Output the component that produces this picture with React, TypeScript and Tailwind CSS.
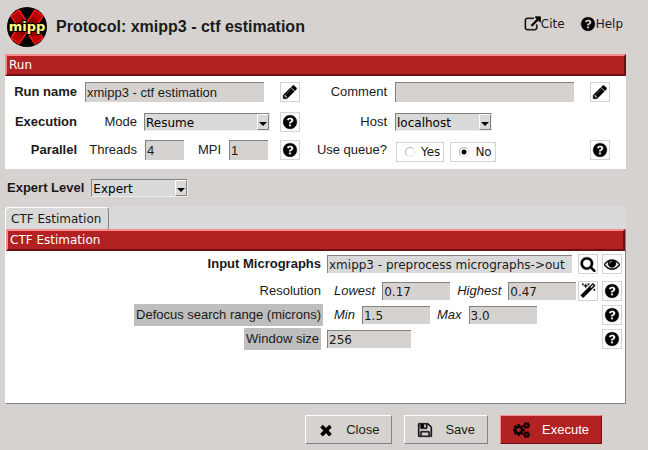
import type { ReactNode } from "react";

const ICONS = {
  pencil:
    "M491 1536l91-91-235-235-91 91v107h128v128h107zm523-928q0-22-22-22-10 0-17 7l-542 542q-7 7-7 17 0 22 22 22 10 0 17-7l542-542q7-7 7-17zm-54-192l416 416-832 832h-416v-416zm683 96q0 53-37 90l-166 166-416-416 166-165q36-38 90-38 53 0 91 38l235 234q37 39 37 91z",
  help:
    "M1024 1376v-192q0-14-9-23t-23-9h-192q-14 0-23 9t-9 23v192q0 14 9 23t23 9h192q14 0 23-9t9-23zm256-672q0-88-55.5-163t-138.5-116-170-41q-243 0-371 213-15 24 8 42l132 100q7 6 19 6 16 0 25-12 53-68 86-92 34-24 86-24 48 0 85.5 26t37.5 59q0 38-20 61t-68 45q-63 28-115.5 86.5t-52.5 125.5v36q0 14 9 23t23 9h192q14 0 23-9t9-23q0-19 21.5-49.5t54.5-49.5q32-18 49-28.5t46-35 44.5-48 28-60.5 12.5-81zm384 192q0 209-103 385.5t-279.5 279.5-385.5 103-385.5-103-279.5-279.5-103-385.5 103-385.5 279.5-279.5 385.5-103 385.5 103 279.5 279.5 103 385.5z",
  search:
    "M1216 832q0-185-131.5-316.5t-316.5-131.5-316.5 131.5-131.5 316.5 131.5 316.5 316.5 131.5 316.5-131.5 131.5-316.5zm512 832q0 52-38 90t-90 38q-54 0-90-38l-343-342q-179 124-399 124-143 0-273.5-55.5t-225-150-150-225-55.5-273.5 55.5-273.5 150-225 225-150 273.5-55.5 273.5 55.5 225 150 150 225 55.5 273.5q0 220-124 399l343 343q37 37 37 90z",
  eye:
    "M1664 960q-152-236-381-353 61 104 61 225 0 185-131.5 316.5t-316.5 131.5-316.5-131.5-131.5-316.5q0-121 61-225-229 117-381 353 133 205 333.5 326.5t434.5 121.5 434.5-121.5 333.5-326.5zm-720-384q0-20-14-34t-34-14q-125 0-214.5 89.5t-89.5 214.5q0 20 14 34t34 14 34-14 14-34q0-86 61-147t147-61q20 0 34-14t14-34zm848 384q0 34-20 69-140 230-376.5 368.5t-499.5 138.5-499.5-139-376.5-368q-20-35-20-69t20-69q140-229 376.5-368t499.5-139 499.5 139 376.5 368q20 35 20 69z",
  external:
    "M1472 992v320q0 119-84.5 203.5t-203.5 84.5h-832q-119 0-203.5-84.5t-84.5-203.5v-832q0-119 84.5-203.5t203.5-84.5h704q14 0 23 9t9 23v64q0 14-9 23t-23 9h-704q-66 0-113 47t-47 113v832q0 66 47 113t113 47h832q66 0 113-47t47-113v-320q0-14 9-23t23-9h64q14 0 23 9t9 23zm384-864v512q0 26-19 45t-45 19-45-19l-176-176-652 652q-10 10-23 10t-23-10l-114-114q-10-10-10-23t10-23l652-652-176-176q-19-19-19-45t19-45 45-19h512q26 0 45 19t19 45z",
  magic:
    "M1254 581l293-293-107-107-293 293zm447-293q0 27-18 45l-1286 1286q-18 18-45 18t-45-18l-198-198q-18-18-18-45t18-45l1286-1286q18-18 45-18t45 18l198 198q18 18 18 45zm-1351-190l98 30-98 30-30 98-30-98-98-30 98-30 30-98zm350 162l196 60-196 60-60 196-60-196-196-60 196-60 60-196zm930 478l98 30-98 30-30 98-30-98-98-30 98-30 30-98zm-640-640l98 30-98 30-30 98-30-98-98-30 98-30 30-98z",
  save:
    "M512 1536h768v-384h-768v384zm896 0h128v-896q0-14-10-38.5t-20-34.5l-281-281q-10-10-34-20t-39-10v416q0 40-28 68t-68 28h-576q-40 0-68-28t-28-68v-416h-128v1280h128v-416q0-40 28-68t68-28h832q40 0 68 28t28 68v416zm-384-928v-320q0-13-9.5-22.5t-22.5-9.5h-192q-13 0-22.5 9.5t-9.5 22.5v320q0 13 9.5 22.5t22.5 9.5h192q13 0 22.5-9.5t9.5-22.5zm640 32v928q0 40-28 68t-68 28h-1344q-40 0-68-28t-28-68v-1344q0-40 28-68t68-28h928q40 0 88 20t76 48l280 280q28 28 48 76t20 88z",
  times:
    "M1490 1322q0 40-28 68l-136 136q-28 28-68 28t-68-28l-294-294-294 294q-28 28-68 28t-68-28l-136-136q-28-28-28-68t28-68l294-294-294-294q-28-28-28-68t28-68l136-136q28-28 68-28t68 28l294 294 294-294q28-28 68-28t68 28l136 136q28 28 28 68t-28 68l-294 294 294 294q28 28 28 68z",
  cogs:
    "M896 896q0-106-75-181t-181-75-181 75-75 181 75 181 181 75 181-75 75-181zm768 512q0-52-38-90t-90-38-90 38-38 90q0 53 37.5 90.5t90.5 37.5 90.5-37.5 37.5-90.5zm0-1024q0-52-38-90t-90-38-90 38-38 90q0 53 37.5 90.5t90.5 37.5 90.5-37.5 37.5-90.5zm-384 421v185q0 10-7 19.5t-16 10.5l-155 24q-11 35-32 76 34 48 90 115 7 11 7 20 0 12-7 19-23 30-82.5 89.5t-78.5 59.5q-11 0-21-7l-115-90q-37 19-77 31-11 108-23 155-7 24-30 24h-186q-11 0-20-7.5t-10-17.5l-23-153q-34-10-75-31l-118 89q-7 7-20 7-11 0-21-8-144-133-144-160 0-9 7-19 10-14 41-53t47-61q-23-44-35-82l-152-24q-10-1-17-9.5t-7-19.5v-185q0-10 7-19.5t16-10.5l155-24q11-35 32-76-34-48-90-115-7-11-7-20 0-12 7-20 22-30 82-89t79-59q11 0 21 7l115 90q34-18 77-32 11-108 23-154 7-24 30-24h186q11 0 20 7.5t10 17.5l23 153q34 10 75 31l118-89q8-7 20-7 11 0 21 8 144 133 144 160 0 8-7 19-12 16-42 54t-45 60q23 48 34 82l152 23q10 2 17 10.5t7 19.5zm640 533v140q0 16-149 31-12 27-30 52 51 113 51 138 0 4-4 7-122 71-124 71-8 0-46-47t-52-68q-20 2-30 2t-30-2q-14 21-52 68t-46 47q-2 0-124-71-4-3-4-7 0-25 51-138-18-25-30-52-149-15-149-31v-140q0-16 149-31 13-29 30-52-51-113-51-138 0-4 4-7 4-2 35-20t59-34 30-16q8 0 46 46.5t52 67.5q20-2 30-2t30 2q51-71 92-112l6-2q4 0 124 70 4 3 4 7 0 25-51 138 17 23 30 52 149 15 149 31zm0-1024v140q0 16-149 31-12 27-30 52 51 113 51 138 0 4-4 7-122 71-124 71-8 0-46-47t-52-68q-20 2-30 2t-30-2q-14 21-52 68t-46 47q-2 0-124-71-4-3-4-7 0-25 51-138-18-25-30-52-149-15-149-31v-140q0-16 149-31 13-29 30-52-51-113-51-138 0-4 4-7 4-2 35-20t59-34 30-16q8 0 46 46.5t52 67.5q20-2 30-2t30 2q51-71 92-112l6-2q4 0 124 70 4 3 4 7 0 25-51 138 17 23 30 52 149 15 149 31z",
};

type IconName = keyof typeof ICONS;

const VIEW_BOXES: Partial<Record<IconName, string>> = {
  external: "0 0 1856 1792",
  cogs: "0 0 1920 1792",
};

function Icon({ name, className = "size-4" }: { name: IconName; className?: string }) {
  return (
    <svg viewBox={VIEW_BOXES[name] ?? "0 0 1792 1792"} className={`${className} shrink-0`} fill="#000" stroke="#000" strokeWidth="40" aria-hidden="true">
      <path d={ICONS[name]} />
    </svg>
  );
}

function IconButton({ name, label }: { name: IconName; label: string }) {
  return (
    <button type="button" aria-label={label} className="flex size-5 shrink-0 items-center justify-center border border-[#d6d2cf] bg-white">
      <Icon name={name} />
    </button>
  );
}

function SectionBar({ children }: { children: ReactNode }) {
  return (
    <h2 className="h-[22px] border-2 border-t-[#f98c8c] border-r-[#6b1014] border-b-[#6b1014] border-l-[#f98c8c] bg-[#b22222] px-0.5 font-['DejaVu_Sans',sans-serif] text-xs leading-[18px] text-white">
      {children}
    </h2>
  );
}

const SUNKEN = "border-t border-l border-t-[#828282] border-l-[#828282]";

function Field({ id, value, className }: { id: string; value: string; className: string }) {
  return (
    <input
      id={id}
      type="text"
      defaultValue={value}
      className={`${SUNKEN} rounded-none px-px text-[#1a1a1a] outline-none ${className}`}
    />
  );
}

function Combo({ id, options, className }: { id: string; options: string[]; className: string }) {
  return (
    <div className={`relative h-[18px] shrink-0 ${className}`}>
      <select
        id={id}
        className={`${SUNKEN} block size-full appearance-none rounded-none border-r border-b border-r-[#eeeeee] border-b-[#eeeeee] bg-[#d9d9d9] px-px pt-0.5 font-['DejaVu_Sans',sans-serif] text-xs leading-[14px] text-black outline-none`}
      >
        {options.map((o) => (
          <option key={o}>{o}</option>
        ))}
      </select>
      <span className="pointer-events-none absolute top-px right-px flex h-4 w-3 items-end justify-center border border-t-white border-r-[#828282] border-b-[#828282] border-l-white bg-[#d9d9d9] pb-[3px]">
        <svg viewBox="0 0 8 4" className="h-1 w-2" aria-hidden="true">
          <path d="M0 0h8L4 4z" />
        </svg>
      </span>
    </div>
  );
}

function QueueOption({ label, checked }: { label: string; checked?: boolean }) {
  return (
    <label className="flex h-5 items-center gap-1.5 border border-[#d6d2cf] bg-white pr-[3px] pl-2 font-['DejaVu_Sans',sans-serif] text-xs text-[#1a1a1a]">
      <input
        type="radio"
        name="queue"
        defaultChecked={checked}
        className="size-2.5 appearance-none rounded-full border border-[#b0b0b0] border-r-[#e4e4e4] border-b-[#e4e4e4] bg-white checked:bg-[radial-gradient(circle,#000_2px,#fff_3px)]"
      />
      {label}
    </label>
  );
}

function Logo() {
  return (
    <svg viewBox="0 0 40 40" className="size-10 shrink-0" role="img" aria-label="Xmipp logo">
      <defs>
        <clipPath id="disc">
          <circle cx="20" cy="20" r="20" />
        </clipPath>
        <radialGradient id="glow">
          <stop offset="0.1" stopColor="#500000" />
          <stop offset="0.8" stopColor="#b80000" />
        </radialGradient>
      </defs>
      <circle cx="20" cy="20" r="20" fill="#000" />
      <g clipPath="url(#disc)">
        <path
          d="M12 3L20 15L28 3L36 9L29 20L36 31L28 37L20 25L12 37L4 31L11 20L4 9Z"
          fill="url(#glow)"
          stroke="#ff1414"
          strokeWidth="1.5"
        />
      </g>
      <text
        x="20"
        y="24"
        textAnchor="middle"
        fill="#ffff80"
        stroke="#000"
        strokeWidth="2"
        paintOrder="stroke"
        className="font-['DejaVu_Sans',sans-serif] text-[13px] font-bold"
      >
        mipp
      </text>
    </svg>
  );
}

const RAISED = "flex h-[29px] items-center gap-3 border px-3 text-[13px]";
const RAISED_GREY = "border-t-white border-r-[#828282] border-b-[#828282] border-l-white";
const GREY_FIELD = "h-5 bg-[#d6d2cf]";
const PARAM_FIELD = "h-[18px] bg-[#d6d2cf] font-['DejaVu_Sans',sans-serif] text-xs";

export default function App() {
  return (
    <main className="min-h-screen bg-[#d6d2cf] pr-[22px] pb-1.5 pl-[5px] font-['Liberation_Sans',Arial,sans-serif] text-[13px] leading-4 text-[#1a1a1a]">
      <header className="flex h-[54px] items-center pl-0.5">
        <Logo />
        <h1 className="ml-[9px] flex-1 text-base font-bold">Protocol: xmipp3 - ctf estimation</h1>
        <nav className="mb-1.5 flex gap-[15px] pr-[3px] font-['DejaVu_Sans',sans-serif] text-xs">
          <a href="#cite" className="flex items-center">
            <Icon name="external" className="h-4 w-[17px]" />
            Cite
          </a>
          <a href="#help" className="flex items-center">
            <Icon name="help" />
            Help
          </a>
        </nav>
      </header>

      <section className="bg-white pb-[5px]">
        <SectionBar>Run</SectionBar>
        <div className="grid grid-cols-[72px_187px_20px_79px_1fr_20px] grid-rows-[32px_28px_28px] items-center gap-x-2 pr-4 [&>*:nth-child(3n)]:justify-self-end">
          <label htmlFor="run-name" className="text-right font-bold">Run name</label>
          <Field id="run-name" value="xmipp3 - ctf estimation" className={`${GREY_FIELD} w-[179px]`} />
          <IconButton name="pencil" label="Edit run name" />
          <label htmlFor="comment" className="text-right">Comment</label>
          <Field id="comment" value="" className={`${GREY_FIELD} mr-2 w-auto`} />
          <IconButton name="pencil" label="Edit comment" />

          <span className="text-right font-bold">Execution</span>
          <div className="flex items-center">
            <label htmlFor="mode" className="mr-[7px] w-[52px] text-right">Mode</label>
            <Combo id="mode" options={["Resume", "Restart"]} className="w-[126px]" />
          </div>
          <IconButton name="help" label="Execution help" />
          <label htmlFor="host" className="text-right">Host</label>
          <Combo id="host" options={["localhost"]} className="w-[97px]" />
          <span />

          <span className="text-right font-bold">Parallel</span>
          <div className="flex items-center">
            <label htmlFor="threads" className="mr-2 w-[52px] text-right">Threads</label>
            <Field id="threads" value="4" className={`${GREY_FIELD} w-[39px]`} />
            <label htmlFor="mpi" className="mr-2 w-[37px] text-right">MPI</label>
            <Field id="mpi" value="1" className={`${GREY_FIELD} w-[39px]`} />
          </div>
          <IconButton name="help" label="Parallel help" />
          <span className="text-right">Use queue?</span>
          <div role="radiogroup" aria-label="Use queue?" className="flex gap-1.5 pt-1 pl-px">
            <QueueOption label="Yes" />
            <QueueOption label="No" checked />
          </div>
          <IconButton name="help" label="Queue help" />
        </div>
      </section>

      <div className="flex h-[38px] items-center gap-[7px] pl-0.5">
        <label htmlFor="level" className="font-bold">Expert Level</label>
        <Combo id="level" options={["Expert", "Normal"]} className="w-[97px]" />
      </div>

      <section>
        <div role="tablist" className="flex h-[22px] bg-[#d9d9d9]">
          <button
            type="button"
            role="tab"
            aria-selected="true"
            className="rounded-t border-t border-r border-l border-t-white border-r-[#828282] border-l-white pr-[7px] pl-[5px] font-['DejaVu_Sans',sans-serif] text-xs"
          >
            CTF Estimation
          </button>
        </div>
        <div role="tabpanel" className="min-h-[175px] border-r border-b border-l border-r-[#828282] border-b-[#828282] border-l-white bg-white">
          <SectionBar>CTF Estimation</SectionBar>
          <div className="flex flex-col">
            <div className="mb-0.5 flex h-[26px] items-center gap-1 pr-[3px]">
              <label htmlFor="micrographs" className="w-[317px] shrink-0 pr-0.5 text-right font-bold">Input Micrographs</label>
              <Field
                id="micrographs"
                value="xmipp3 - preprocess micrographs->out"
                className="mr-0.5 h-[18px] min-w-0 flex-1 bg-[#d9d9d9] font-['DejaVu_Sans',sans-serif] text-xs"
              />
              <IconButton name="search" label="Select micrographs" />
              <IconButton name="eye" label="View micrographs" />
            </div>
            <div className="flex h-6 items-center gap-1 pr-[3px]">
              <span className="w-[317px] shrink-0 pr-0.5 text-right">Resolution</span>
              <div className="-mr-1 flex flex-1 items-center gap-[7px] pl-[7px]">
                <label htmlFor="lowest" className="italic">Lowest</label>
                <Field id="lowest" value="0.17" className={`${PARAM_FIELD} w-[68px]`} />
                <label htmlFor="highest" className="italic">Highest</label>
                <Field id="highest" value="0.47" className={`${PARAM_FIELD} w-[68px]`} />
              </div>
              <IconButton name="magic" label="Resolution wizard" />
              <IconButton name="help" label="Resolution help" />
            </div>
            <div className="flex h-6 items-center gap-1 pr-[3px]">
              <div className="flex w-[317px] shrink-0 justify-end">
                <span className="bg-[#bebebe] px-0.5 py-[3px]">Defocus search range (microns)</span>
              </div>
              <div className="flex flex-1 items-center gap-[7px] pl-[7px]">
                <label htmlFor="min" className="italic">Min</label>
                <Field id="min" value="1.5" className={`${PARAM_FIELD} w-[68px]`} />
                <label htmlFor="max" className="italic">Max</label>
                <Field id="max" value="3.0" className={`${PARAM_FIELD} w-[68px]`} />
              </div>
              <IconButton name="help" label="Defocus help" />
            </div>
            <div className="flex h-6 items-center gap-1 pr-[3px]">
              <div className="flex w-[317px] shrink-0 justify-end pr-0.5">
                <label htmlFor="window-size" className="bg-[#bebebe] px-0.5 py-[3px]">Window size</label>
              </div>
              <div className="flex flex-1">
                <Field id="window-size" value="256" className={`${PARAM_FIELD} w-[84px]`} />
              </div>
              <IconButton name="help" label="Window size help" />
            </div>
          </div>
        </div>
      </section>

      <footer className="flex justify-end gap-3 pt-[11px] pr-6">
        <button type="button" className={`${RAISED} ${RAISED_GREY}`}>
          <Icon name="times" />
          Close
        </button>
        <button type="button" className={`${RAISED} ${RAISED_GREY}`}>
          <Icon name="save" />
          Save
        </button>
        <button type="button" className={`${RAISED} border-t-[#f98c8c] border-r-[#6b1014] border-b-[#6b1014] border-l-[#f98c8c] bg-[#b22222] text-white`}>
          <Icon name="cogs" className="h-4 w-[17px]" />
          Execute
        </button>
      </footer>
    </main>
  );
}
